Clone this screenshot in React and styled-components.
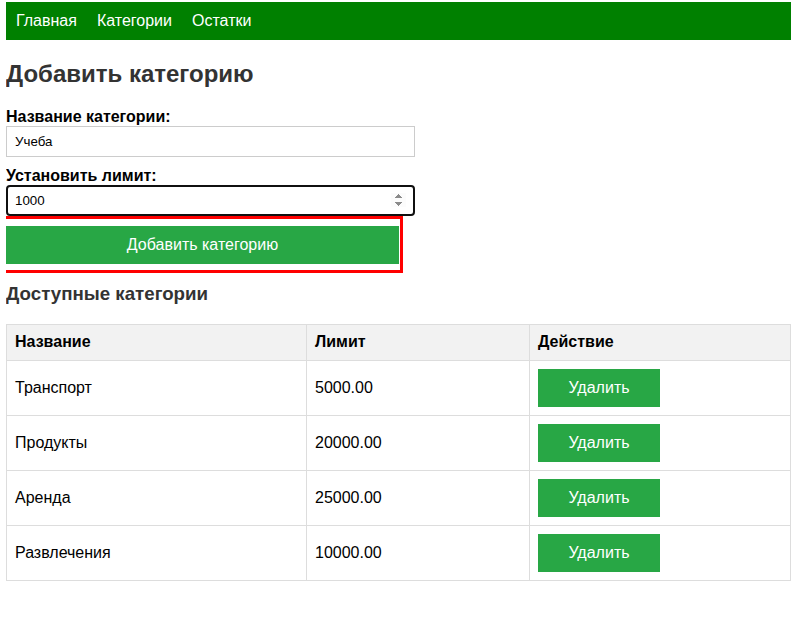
import styled, { createGlobalStyle } from 'styled-components'

const GlobalStyle = createGlobalStyle`
  body {
    margin: 2px 6px 0;
    font-family: "Liberation Sans", Arial, sans-serif;
    color: #000;
    background: #fff;
  }
`

const Nav = styled.nav`
  display: flex;
  gap: 20px;
  padding: 10px;
  background: #008000;
`

const NavLink = styled.a`
  color: #fff;
  font-size: 16px;
  text-decoration: none;
`

const Title = styled.h2`
  margin: 20px 0;
  font-size: 24px;
  color: #333;
`

const Form = styled.form`
  width: 409px;
`

const Label = styled.label`
  display: block;
  font-size: 16px;
  font-weight: 700;
`

const Input = styled.input`
  display: block;
  box-sizing: border-box;
  width: 409px;
  height: 31px;
  margin: 0 0 ${({ $last }) => ($last ? '0' : '10px')};
  padding: 7px 8px;
  border: 1px solid #ccc;
  border-radius: 0;
  font-family: "Liberation Sans", Arial, sans-serif;
  font-size: 13.33px;
  color: #000;

  ${({ $active }) => $active && `
    border: 2px solid #101010;
    border-radius: 4px;
    padding: 6px 7px;
    outline: none;
    &:focus { outline: none; }
    &::-webkit-inner-spin-button { background: #eee; }
  `}
`

const Highlight = styled.div`
  width: 394px;
  box-sizing: border-box;
  margin-top: 3px;
  padding: 7px 1px 6px 0;
  outline: 3px solid #ff0000;
`

const PrimaryButton = styled.button`
  display: block;
  width: 100%;
  padding: 10px;
  border: none;
  background: #28a745;
  color: #fff;
  font-family: inherit;
  font-size: 16px;
  line-height: 18.4px;
  cursor: pointer;
`

const Subtitle = styled.h3`
  margin: 13px 0 19px;
  font-size: 18.72px;
  color: #333;
`

const Table = styled.table`
  width: 100%;
  border-collapse: collapse;
  table-layout: fixed;
  font-size: 16px;
`

const Th = styled.th`
  padding: 8px;
  border: 1px solid #ddd;
  background: #f2f2f2;
  text-align: left;
  line-height: 18.4px;
`

const Td = styled.td`
  padding: 8px;
  border: 1px solid #ddd;
  line-height: 18.4px;
`

const DeleteButton = styled.button`
  display: block;
  width: 122px;
  padding: 10px 0;
  border: none;
  background: #28a745;
  color: #fff;
  font-family: inherit;
  font-size: 16px;
  line-height: 18px;
  cursor: pointer;
`

const categories = [
  { name: 'Транспорт', limit: '5000.00' },
  { name: 'Продукты', limit: '20000.00' },
  { name: 'Аренда', limit: '25000.00' },
  { name: 'Развлечения', limit: '10000.00' },
]

export default function App() {
  return (
    <>
      <GlobalStyle />
      <Nav>
        <NavLink href="#">Главная</NavLink>
        <NavLink href="#">Категории</NavLink>
        <NavLink href="#">Остатки</NavLink>
      </Nav>

      <Title>Добавить категорию</Title>

      <Form onSubmit={(e) => e.preventDefault()}>
        <Label htmlFor="name">Название категории:</Label>
        <Input id="name" type="text" defaultValue="Учеба" />
        <Label htmlFor="limit">Установить лимит:</Label>
        <Input id="limit" type="number" defaultValue="1000" $active $last autoFocus />
        <Highlight>
          <PrimaryButton type="submit">Добавить категорию</PrimaryButton>
        </Highlight>
      </Form>

      <Subtitle>Доступные категории</Subtitle>

      <Table>
        <colgroup>
          <col style={{ width: 300 }} />
          <col style={{ width: 223 }} />
          <col />
        </colgroup>
        <thead>
          <tr>
            <Th>Название</Th>
            <Th>Лимит</Th>
            <Th>Действие</Th>
          </tr>
        </thead>
        <tbody>
          {categories.map((c) => (
            <tr key={c.name}>
              <Td>{c.name}</Td>
              <Td>{c.limit}</Td>
              <Td>
                <DeleteButton type="button">Удалить</DeleteButton>
              </Td>
            </tr>
          ))}
        </tbody>
      </Table>
    </>
  )
}
